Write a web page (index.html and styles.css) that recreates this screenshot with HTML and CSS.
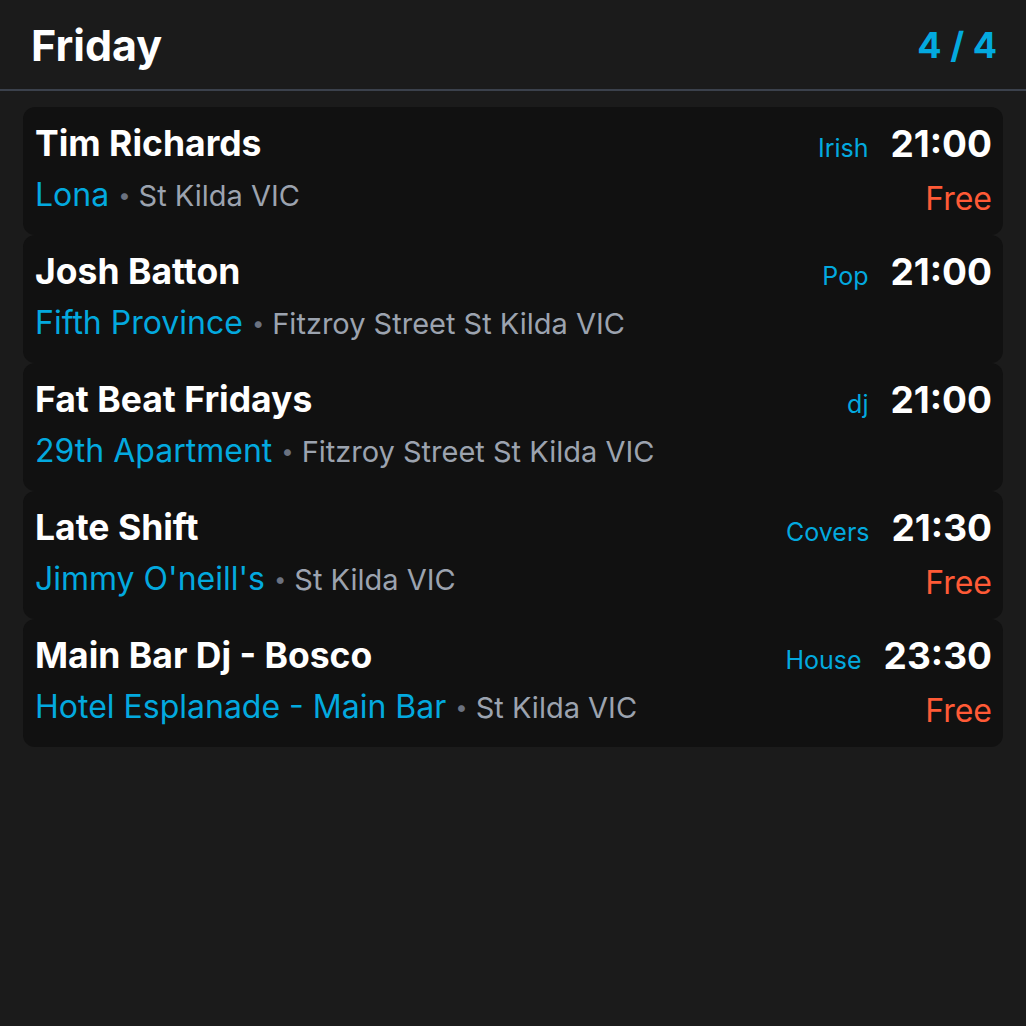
FILE: index.html
```html
<!DOCTYPE html>
<html lang="en">
<head>
<meta charset="utf-8">
<title>Friday</title>
<link rel="stylesheet" href="styles.css">
</head>
<body>
<header class="day-header">
  <h1 class="day-title">Friday</h1>
  <div class="day-count">4 / 4</div>
</header>
<main class="gig-list">
  <article class="gig">
    <div class="gig-main">
      <div class="gig-name">Tim Richards</div>
      <div class="gig-place"><span class="venue">Lona</span><span class="dot">•</span><span class="suburb">St Kilda VIC</span></div>
    </div>
    <div class="gig-side">
      <div class="gig-when"><span class="genre">Irish</span><span class="time">21:00</span></div>
      <div class="price">Free</div>
    </div>
  </article>
  <article class="gig">
    <div class="gig-main">
      <div class="gig-name">Josh Batton</div>
      <div class="gig-place"><span class="venue">Fifth Province</span><span class="dot">•</span><span class="suburb">Fitzroy Street St Kilda VIC</span></div>
    </div>
    <div class="gig-side">
      <div class="gig-when"><span class="genre">Pop</span><span class="time">21:00</span></div>
      <div class="price"></div>
    </div>
  </article>
  <article class="gig">
    <div class="gig-main">
      <div class="gig-name">Fat Beat Fridays</div>
      <div class="gig-place"><span class="venue">29th Apartment</span><span class="dot">•</span><span class="suburb">Fitzroy Street St Kilda VIC</span></div>
    </div>
    <div class="gig-side">
      <div class="gig-when"><span class="genre">dj</span><span class="time">21:00</span></div>
      <div class="price"></div>
    </div>
  </article>
  <article class="gig">
    <div class="gig-main">
      <div class="gig-name">Late Shift</div>
      <div class="gig-place"><span class="venue">Jimmy O'neill's</span><span class="dot">•</span><span class="suburb">St Kilda VIC</span></div>
    </div>
    <div class="gig-side">
      <div class="gig-when"><span class="genre">Covers</span><span class="time">21:30</span></div>
      <div class="price">Free</div>
    </div>
  </article>
  <article class="gig">
    <div class="gig-main">
      <div class="gig-name">Main Bar Dj - Bosco</div>
      <div class="gig-place"><span class="venue">Hotel Esplanade - Main Bar</span><span class="dot">•</span><span class="suburb">St Kilda VIC</span></div>
    </div>
    <div class="gig-side">
      <div class="gig-when"><span class="genre">House</span><span class="time">23:30</span></div>
      <div class="price">Free</div>
    </div>
  </article>
</main>
</body>
</html>
```
FILE: styles.css
```css
html, body {
  margin: 0;
  padding: 0;
  background: #1b1b1b;
  font-family: "Inter", "Noto Sans", sans-serif;
  color: #fff;
}
.day-header {
  display: flex;
  align-items: center;
  justify-content: space-between;
  box-sizing: border-box;
  height: 91px;
  padding: 0 29px 0 31px;
  border-bottom: 2px solid #3b414c;
}
.day-title {
  margin: 0;
  font-size: 43px;
  font-weight: 700;
}
.day-count {
  font-size: 36px;
  font-weight: 700;
  color: #03a9df;
}
.gig-list {
  display: flex;
  flex-direction: column;
  padding: 16px 23px;
}
.gig {
  display: flex;
  justify-content: space-between;
  box-sizing: border-box;
  background: #111111;
  border-radius: 12px;
  padding: 15px 11px 0 12px;
  height: 128px;
}
.gig-main, .gig-side {
  display: flex;
  flex-direction: column;
  gap: 7px;
}
.gig-side { align-items: flex-end; }
.gig-name {
  font-size: 35.5px;
  font-weight: 700;
  line-height: 44px;
}
.gig-place {
  line-height: 44px;
}
.venue { color: #03a9df; font-size: 32px; }
.dot { color: #6b7280; font-size: 22px; margin: 0 8px 0 9px; vertical-align: 3px; }
.suburb { color: #9ca3af; font-size: 29px; }
.gig-when {
  display: flex;
  align-items: baseline;
  gap: 22px;
  line-height: 44px;
}
.genre {
  font-size: 25px;
  color: #03a9df;
}
.time {
  font-size: 37px;
  font-weight: 700;
}
.price {
  font-size: 32px;
  line-height: 44px;
  color: #ff5a36;
}
```
